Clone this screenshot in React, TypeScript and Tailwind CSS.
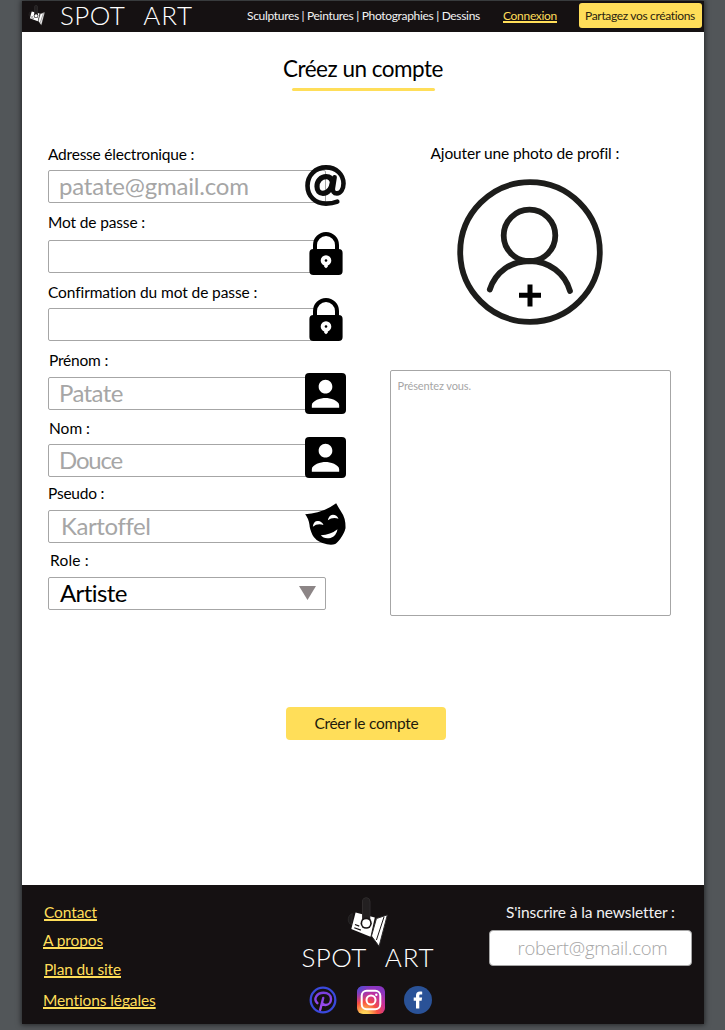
import type { ReactNode } from "react";

function SpotLogo({ className }: { className: string }) {
  return (
    <svg viewBox="200 48 130 154" className={className} aria-hidden="true">
      <path d="M216 98Q202 104 204 120Q206 130 214 132Z" fill="#1d1b1c" stroke="#3a3839" strokeWidth="1.5" />
      <path d="M226 95L284 110L271 168L213 145Z" fill="#fff" />
      <path d="M289 113L322 102L297 197L274 166Z" fill="#fff" stroke="#2c2a2b" strokeWidth="3" />
      <path d="M312 108L289 178" stroke="#151112" strokeWidth="3" />
      <path d="M224 131l13 5M222 141l20 7" stroke="#151112" strokeWidth="3.5" />
      <path d="M258 62V116" stroke="#3d3b3c" strokeWidth="25" strokeLinecap="round" />
      <path d="M258 62V116" stroke="#232021" strokeWidth="22" strokeLinecap="round" />
      <circle cx="258" cy="127" r="17" fill="#151112" />
      <circle cx="258" cy="127" r="12" fill="#fff" />
    </svg>
  );
}

function AtIcon() {
  return (
    <svg viewBox="0 0 41 41" className="absolute -top-[6.5px] left-[256px] size-[41px]" fill="none" stroke="#0d0d0d" strokeLinecap="round" aria-hidden="true">
      <path d="M32.3 36.6C28.8 38 25 38.6 21 38.6C10.4 38.6 2.5 31.2 2.5 20.8C2.5 10.2 10.6 2.4 21 2.4C31.4 2.4 38.5 9.4 38.5 18.6C38.5 24.6 35.4 28.4 31.9 28.4C28.8 28.4 27.4 26 27.9 23.1L29.6 12.2" strokeWidth="4.6" />
      <path d="M27.4 17.5C26.9 13.7 24.6 11.7 21.2 11.7C15.9 11.7 12 16.1 12 21.4C12 25.7 14.4 28.3 17.9 28.3C23 28.3 26.4 24 27.4 17.5Z" strokeWidth="5.2" />
    </svg>
  );
}

function LockIcon({ className }: { className: string }) {
  return (
    <svg viewBox="0 0 34 43" className={"absolute left-[260px] h-[43px] w-[34px] " + className} aria-hidden="true">
      <path d="M6 19V13a11 11 0 0 1 22 0V19" fill="#fff" stroke="#000" strokeWidth="4" />
      <rect x=".4" y="17" width="33.2" height="26" rx="4" />
      <path d="M17 23.2a5.3 5.3 0 0 0-5.3 5.3c0 2.4 1.5 4 3.5 5v1.2L17 36.3l1.8-1.6v-1.2c2-1 3.5-2.6 3.5-5a5.3 5.3 0 0 0-5.3-5.3Z" fill="#fff" />
      <circle cx="17" cy="28.5" r="1.3" />
    </svg>
  );
}

function AccountIcon({ className }: { className: string }) {
  return (
    <svg viewBox="3 3 18 18" className={"absolute left-[256px] size-[41px] " + className} aria-hidden="true">
      <rect x="3" y="3" width="18" height="18" rx="1.8" />
      <path fill="#fff" d="M15 9c0 1.66-1.34 3-3 3s-3-1.34-3-3 1.34-3 3-3 3 1.34 3 3ZM6 17.2c0-2.1 4-3.2 6-3.2s6 1.1 6 3.2v1.1H6Z" />
    </svg>
  );
}

function MaskIcon() {
  return (
    <svg viewBox="0 0 122 126" className="absolute -top-[8px] left-[256px] h-[42px] w-[41px]" aria-hidden="true">
      <path d="M0 34Q54 30 93 1Q100 14 108 26Q122 45 121 76Q118 90 105 108Q94 121 90 123Q75 128 52 120Q30 112 22 96Q13 76 13 66Q10 46 0 34Z" />
      <path fill="#fff" d="M23 71Q25 53 39 54Q50 55 55 66Q37 60 23 71ZM68 52Q70 37 83 35Q95 35 100 47Q82 41 68 52ZM47 97Q76 96 97 79Q94 99 76 105Q56 109 47 97Z" />
    </svg>
  );
}

function ProfileIcon() {
  return (
    <svg viewBox="0 0 146 146" className="size-[146px]" fill="none" stroke="#1d1d1b" strokeWidth="5.8" aria-hidden="true">
      <circle cx="73" cy="73" r="69.8" />
      <circle cx="72.5" cy="56.5" r="25.8" />
      <path d="M32.8 110.5C38.5 93 54 82 72.7 82C92 82 108 94.5 113 112" strokeLinecap="round" />
      <path d="M62 116.3H84M73 105.5V127.5" stroke="#000" strokeWidth="5" />
    </svg>
  );
}

function PinterestIcon() {
  return (
    <svg viewBox="0 0 28 28" className="size-7" fill="none" aria-hidden="true">
      <defs>
        <linearGradient id="pin" x1="0" y1="0" x2="0" y2="1">
          <stop offset="0" stopColor="#7a3fe0" />
          <stop offset="1" stopColor="#a24df0" />
        </linearGradient>
      </defs>
      <circle cx="14" cy="14" r="12.3" stroke="#3a49dc" strokeWidth="2.3" />
      <path d="M8.4 17.2C3.8 12.6 8 6.8 14.5 6.8C19 6.8 22 9.3 22 12.9C22 16.5 19.5 19 16.6 19C14.5 19 13.2 18 13 16.5M14.2 12L11.2 23.8" stroke="url(#pin)" strokeWidth="2.4" strokeLinecap="round" />
    </svg>
  );
}

function InstagramIcon() {
  return (
    <svg viewBox="0 0 28 28" className="size-7" fill="none" aria-hidden="true">
      <defs>
        <radialGradient id="ig" cx=".27" cy="1.05" r="1.05">
          <stop offset="0" stopColor="#ffd960" />
          <stop offset=".15" stopColor="#fecb52" />
          <stop offset=".45" stopColor="#f8503f" />
          <stop offset=".75" stopColor="#c9309a" />
          <stop offset="1" stopColor="#8a35c0" />
        </radialGradient>
        <radialGradient id="igb" cx="0" cy="0" r=".6">
          <stop offset="0" stopColor="#3a55d8" />
          <stop offset="1" stopColor="#6a3fd0" stopOpacity="0" />
        </radialGradient>
      </defs>
      <rect width="28" height="28" rx="6" fill="url(#ig)" />
      <rect width="28" height="28" rx="6" fill="url(#igb)" />
      <rect x="4.7" y="4.7" width="18.6" height="18.6" rx="5" stroke="#fff" strokeWidth="2" />
      <circle cx="14" cy="14" r="4.5" stroke="#fff" strokeWidth="2" />
      <circle cx="19.3" cy="8.7" r="1.2" fill="#fff" />
    </svg>
  );
}

function FacebookIcon() {
  return (
    <svg viewBox="0 0 28 28" className="size-7" aria-hidden="true">
      <circle cx="14" cy="14" r="14" fill="#2a5297" />
      <path fill="#fff" d="M12 22.5V14.7H9.7V11.5H12V9.6C12 6.9 13.4 5.6 16 5.6C17 5.6 17.7 5.7 18.2 5.8V8.6H16.6C15.6 8.6 15.3 9.1 15.3 10V11.5H18.1L17.6 14.7H15.3V22.5Z" />
    </svg>
  );
}

function Field({ label, labelClass, className, children }: { label: string; labelClass: string; className: string; children?: ReactNode }) {
  return (
    <div className={"flex flex-col " + className}>
      <label className={"h-5 text-[15.5px] leading-5 whitespace-nowrap " + labelClass}>{label}</label>
      <div className="relative flex h-[33px] w-[278px] items-center rounded-[2px] border border-[#a6a6a6]">{children}</div>
    </div>
  );
}

const value = "pb-px pl-[10px] text-[24px] leading-[28px] whitespace-nowrap";
const link = "whitespace-nowrap text-[#ffde59] underline decoration-2 [text-decoration-skip-ink:none]";

export default function App() {
  return (
    <div className="h-[1030px] w-[725px] overflow-hidden bg-[#525659] pt-px pl-[22px] font-['Lato','Noto_Sans',sans-serif] text-black">
      <div className="flex h-[1023px] w-[682px] flex-col bg-white shadow-[0_0_5px_1px_rgba(0,0,0,0.55)]">
        <header className="flex h-[31px] shrink-0 items-start bg-[#151112] text-white">
          <SpotLogo className="mt-[4px] ml-[6px] h-[21px] w-[18px]" />
          <div className="ml-[14px] flex h-[29px] w-[133px] justify-between text-[26px] leading-[29px] font-light">
            <span className="tracking-[0.4px]">SPOT</span>
            <span className="tracking-[0.9px]">ART</span>
          </div>
          <nav className="mt-[5px] ml-[54px] w-[234px] text-[12px] leading-5 tracking-[-0.32px] whitespace-nowrap text-[#f2f2f2]">
            Sculptures | Peintures | Photographies | Dessins
          </nav>
          <a className={"mt-[5px] ml-[22px] w-[55px] text-[12px] leading-5 tracking-[-0.3px] underline-offset-1 " + link}>Connexion</a>
          <button className="mt-[2px] ml-[20.5px] h-[25px] w-[123px] rounded-[3px] bg-[#ffde59] text-[12px] leading-[24px] tracking-[-0.34px] whitespace-nowrap text-[#2b2410]">
            Partagez vos créations
          </button>
        </header>

        <main className="flex h-[853px] shrink-0 flex-col">
          <div className="flex flex-col items-center">
            <h1 className="mt-[21px] h-[30px] text-[22.5px] leading-[31px] tracking-[-0.5px] whitespace-nowrap">Créez un compte</h1>
            <div className="mt-[5px] mr-[-1px] h-[3px] w-[143px] rounded-full bg-[#ffde59]" />
          </div>

          <div className="mt-[53px] flex pl-[26px]">
            <form className="flex w-[278px] flex-col">
              <Field label="Adresse électronique :" labelClass="mb-[6px] tracking-[-0.22px]" className="">
                <span className={value + " tracking-[-0.18px] text-[#a6a6a6]"}>patate@gmail.com</span>
                <AtIcon />
              </Field>
              <Field label="Mot de passe :" labelClass="mb-[8px] tracking-[-0.14px]" className="mt-[9px]">
                <LockIcon className="-top-[9px]" />
              </Field>
              <Field label="Confirmation du mot de passe :" labelClass="mb-[6px] tracking-[-0.1px]" className="mt-[9px]">
                <LockIcon className="-top-[11px]" />
              </Field>
              <Field label="Prénom :" labelClass="mb-[7px] pl-px tracking-[-0.2px]" className="mt-[9px]">
                <span className={value + " tracking-[-0.6px] text-[#a6a6a6]"}>Patate</span>
                <AccountIcon className="-top-[5.5px]" />
              </Field>
              <Field label="Nom :" labelClass="mb-[6px] pl-px" className="mt-[8px]">
                <span className={value + " tracking-[-1.2px] text-[#a6a6a6]"}>Douce</span>
                <AccountIcon className="-top-[8px]" />
              </Field>
              <Field label="Pseudo :" labelClass="mb-[7px] tracking-[-0.22px]" className="mt-[6px]">
                <span className={value + " ml-[2px] tracking-[-0.4px] text-[#a6a6a6]"}>Kartoffel</span>
                <MaskIcon />
              </Field>
              <Field label="Role :" labelClass="mb-[7px] pl-[2px] tracking-[0.2px]" className="mt-[7px]">
                <span className={value + " ml-px grow tracking-[-0.6px]"}>Artiste</span>
                <svg viewBox="0 0 17 14" className="mr-[9px] mb-px h-[14px] w-[17px]" aria-hidden="true">
                  <path d="M0 0H17L8.5 14Z" fill="#8c8586" />
                </svg>
              </Field>
            </form>

            <section className="ml-[63.5px] flex w-[281px] flex-col">
              <div className="-mt-px h-5 pl-[41px] text-[15.5px] leading-5 tracking-[-0.13px] whitespace-nowrap">Ajouter une photo de profil :</div>
              <div className="mt-[16px] pl-[67.5px]">
                <ProfileIcon />
              </div>
              <div className="mt-[45px] h-[246px] rounded-[2px] border border-[#a6a6a6] pt-[5px] pl-[7px] text-[11px] leading-5 tracking-[-0.12px] text-[#a6a6a6]">
                Présentez vous.
              </div>
            </section>
          </div>

          <button className="mt-[91px] ml-[264.4px] h-[33px] w-[160px] rounded-[4px] bg-[#ffde59] pb-px text-[15.5px] leading-[30px] tracking-[-0.28px] text-[#1e1a0c]">
            Créer le compte
          </button>
        </main>

        <footer className="flex h-[139px] shrink-0 bg-[#151112] text-[15.5px] leading-5">
          <div className="flex w-[279px] flex-col items-start pt-[17px] pl-[21px]">
            <a className={"ml-px tracking-[-0.11px] underline-offset-1 " + link}>Contact</a>
            <a className={"mt-[8px] tracking-[-0.12px] underline-offset-1 " + link}>A propos</a>
            <a className={"mt-[9px] ml-px tracking-[-0.14px] underline-offset-1 " + link}>Plan du site</a>
            <a className={"mt-[11px] tracking-[-0.11px] underline-offset-1 " + link}>Mentions légales</a>
          </div>
          <div className="flex w-[134px] flex-col items-center">
            <SpotLogo className="mt-[12px] h-[51px] w-[43px]" />
            <div className="-mt-[5px] flex h-[28px] w-[133px] justify-between text-[26px] leading-[28px] font-light text-white">
              <span className="tracking-[0.4px]">SPOT</span>
              <span className="tracking-[0.9px]">ART</span>
            </div>
            <div className="mt-[15px] flex gap-[19.5px] pl-[5px]">
              <PinterestIcon />
              <InstagramIcon />
              <FacebookIcon />
            </div>
          </div>
          <div className="ml-[54px] flex w-[203px] flex-col">
            <div className="mt-[17px] pl-[17px] tracking-[-0.1px] whitespace-nowrap text-[#f2f2f2]">S'inscrire à la newsletter :</div>
            <div className="mt-[8px] flex h-[36px] items-center justify-center rounded-[4px] border border-[#a6a6a6] bg-white pl-1 font-['Open_Sans',sans-serif] text-[18.5px] font-light tracking-[-0.22px] text-[#a6a6a6]">
              robert@gmail.com
            </div>
          </div>
        </footer>
      </div>
    </div>
  );
}
